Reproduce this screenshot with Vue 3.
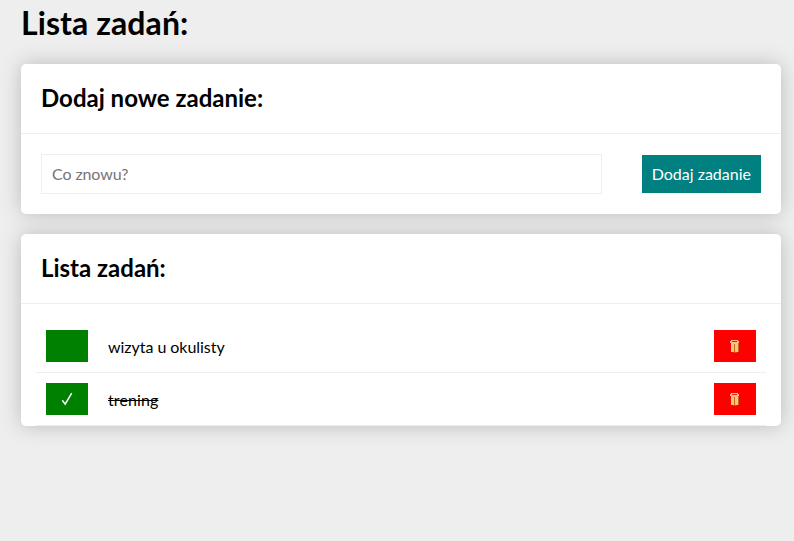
<script setup>
import { ref } from 'vue'
const tasks = ref([
  { name: 'wizyta u okulisty', done: false },
  { name: 'trening', done: true },
])
const draft = ref('')
</script>

<template>
  <main class="container">
    <h1 class="title">Lista zadań:</h1>
    <section class="section">
      <h2 class="header">Dodaj nowe zadanie:</h2>
      <form class="form" @submit.prevent>
        <input v-model="draft" class="input" placeholder="Co znowu?" />
        <button class="add">Dodaj zadanie</button>
      </form>
    </section>
    <section class="section">
      <h2 class="header">Lista zadań:</h2>
      <ul class="list">
        <li v-for="task in tasks" :key="task.name" class="item">
          <button class="toggle">
            <svg v-if="task.done" width="12" height="14" viewBox="0 0 12 14"><path d="M1.3 8.3L4.2 12.2L10.7 1.2" /></svg>
          </button>
          <span class="name" :class="{ done: task.done }">{{ task.name }}</span>
          <button class="remove">
            <svg width="10" height="14" viewBox="0 0 10 14" shape-rendering="crispEdges">
              <path d="M1 0H8V1H9V3H8V12H1V3H0V1H1Z" fill="#f8c090" />
              <path d="M2 1H7V2H2Z" fill="#f01810" />
              <path d="M8 3H9V12H8ZM4 4H5V12H4Z" fill="#cf6a08" />
              <path d="M3 12H7V13H3Z" fill="#d84a00" />
            </svg>
          </button>
        </li>
      </ul>
    </section>
  </main>
</template>

<style>
body {
  background: #eee;
}
</style>

<style scoped>
.container {
  font-family: Lato, sans-serif;
  font-size: 16px;
  padding: 3px 13px 0 21px;
  color: #000;
}
.title {
  margin: 0 0 21px;
  font-size: 32px;
  line-height: 40px;
  font-weight: 700;
  letter-spacing: 0.08px;
}
.section {
  background: #fff;
  border-radius: 5px;
  margin-bottom: 20px;
  box-shadow: 0 0 20px #bbb;
}
.header {
  margin: 0;
  padding: 19px 20px 21px;
  font-size: 24px;
  line-height: 29px;
  border-bottom: 1px solid #eee;
}
.form {
  display: flex;
  gap: 40px;
  padding: 20px;
}
.input {
  flex: 1;
  min-width: 0;
  box-sizing: border-box;
  height: 40px;
  padding: 8px 10px 10px;
  border: 1px solid #eee;
  font: inherit;
  letter-spacing: -0.1px;
}
.add {
  margin: 1px 0;
  padding: 0 10px 2px;
  border: 0;
  background: teal;
  color: #fff;
  font: inherit;
}
.list {
  list-style: none;
  margin: 0;
  padding: 16px 15px 0;
}
.item {
  display: flex;
  align-items: center;
  padding: 10px;
  border-bottom: 1px solid #eee;
}
.toggle,
.remove {
  display: flex;
  align-items: center;
  justify-content: center;
  width: 42px;
  height: 32px;
  padding: 0;
  border: 0;
  background: green;
}
.toggle path {
  fill: none;
  stroke: #fff;
  stroke-width: 1.5;
}
.remove {
  background: red;
}
.remove svg {
  margin: 1px 0 0;
}
.name {
  flex: 1;
  margin-left: 20px;
  letter-spacing: -0.04px;
}
.done {
  text-decoration: line-through;
  letter-spacing: 0.1px;
}
</style>
